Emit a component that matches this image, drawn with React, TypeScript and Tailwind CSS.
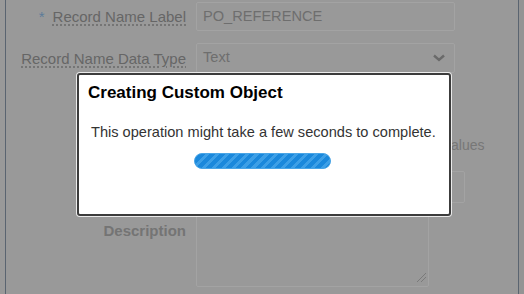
import React from "react";

function Label({ children, required }: { children: React.ReactNode; required?: boolean }) {
  return (
    <div className="w-[186px] shrink-0 text-right text-[15px] text-[#666] leading-none">
      {required && <span className="text-[#5d7c9a] mr-[8px]">*</span>}
      <span className="underline decoration-dotted decoration-[#6a6a6a] underline-offset-[3px]">{children}</span>
    </div>
  );
}

export default function App() {
  return (
    <div className="relative w-[524px] h-[294px] overflow-hidden bg-[#999999] font-['Liberation_Sans',Arial,sans-serif]">
      <div className="absolute left-[5px] top-0 h-full w-[1px] bg-[#5a6470]" />
      <div className="absolute left-[518px] top-0 h-full w-[6px] border-l border-[#5a6470] bg-[#949494]" />

      {/* form behind the overlay */}
      <div className="flex flex-col pt-[2px]">
        <div className="flex items-center gap-[10px] h-[29px]">
          <Label required>Record Name Label</Label>
          <div className="w-[259px] h-[29px] border border-[#a3a3a3] rounded-[2px] flex items-center px-[6px] text-[14.6px] text-[#6e6e6e]">
            PO_REFERENCE
          </div>
        </div>
        <div className="flex items-center gap-[10px] h-[30px] mt-[12px]">
          <Label>Record Name Data Type</Label>
          <div className="w-[259px] h-[30px] border border-[#a3a3a3] rounded-[2px] flex items-center justify-between px-[6px] text-[14.6px] text-[#6e6e6e]">
            <span>Text</span>
            <svg width="14" height="10" viewBox="0 0 14 10" className="mr-[2px]">
              <path d="M2 2.5 L7 7 L12 2.5" fill="none" stroke="#6a6a6a" strokeWidth="2.4" />
            </svg>
          </div>
        </div>
        <div className="flex items-center h-[30px] mt-[57px] pl-[444px] text-[14px] text-[#777]">
          <span className="whitespace-nowrap">values</span>
        </div>
        <div className="flex h-[32px] mt-[11px] pl-[380px]">
          <div className="w-[85px] h-[32px] border border-[#a3a3a3] rounded-[2px]" />
        </div>
        <div className="flex items-start gap-[10px] mt-[8px]">
          <div className="w-[186px] shrink-0 text-right text-[15px] font-bold text-[#747474] pt-[9px]">Description</div>
          <div className="relative w-[233px] h-[76px] border border-[#a3a3a3] rounded-[2px]">
            <svg width="12" height="12" viewBox="0 0 12 12" className="absolute right-[1px] bottom-[3px]">
              <path d="M2 11 L11 2 M6 11 L11 6" stroke="#7a7a7a" strokeWidth="1" />
            </svg>
          </div>
        </div>
      </div>

      {/* modal */}
      <div className="absolute left-[77px] top-[73px] w-[374px] h-[143px] bg-white border-2 border-[#3c3c3c] rounded-[3px] shadow-[0_0_0_1px_rgba(255,255,255,0.8)] px-[9px] pt-[8px]">
        <div className="text-[17px] font-bold text-black leading-[20px]">Creating Custom Object</div>
        <div className="mt-[20px] pl-[3px] text-[14.6px] text-[#333] leading-[18px] whitespace-nowrap">
          This operation might take a few seconds to complete.
        </div>
        <div className="mt-[12px] ml-[106px] w-[137px] h-[16px] rounded-full border border-[#4aa5e6] bg-[#1583d8] bg-[repeating-linear-gradient(-45deg,#1a88dc_0px,#1a88dc_4px,#3d9fe6_4px,#3d9fe6_7px)]" />
      </div>
    </div>
  );
}
